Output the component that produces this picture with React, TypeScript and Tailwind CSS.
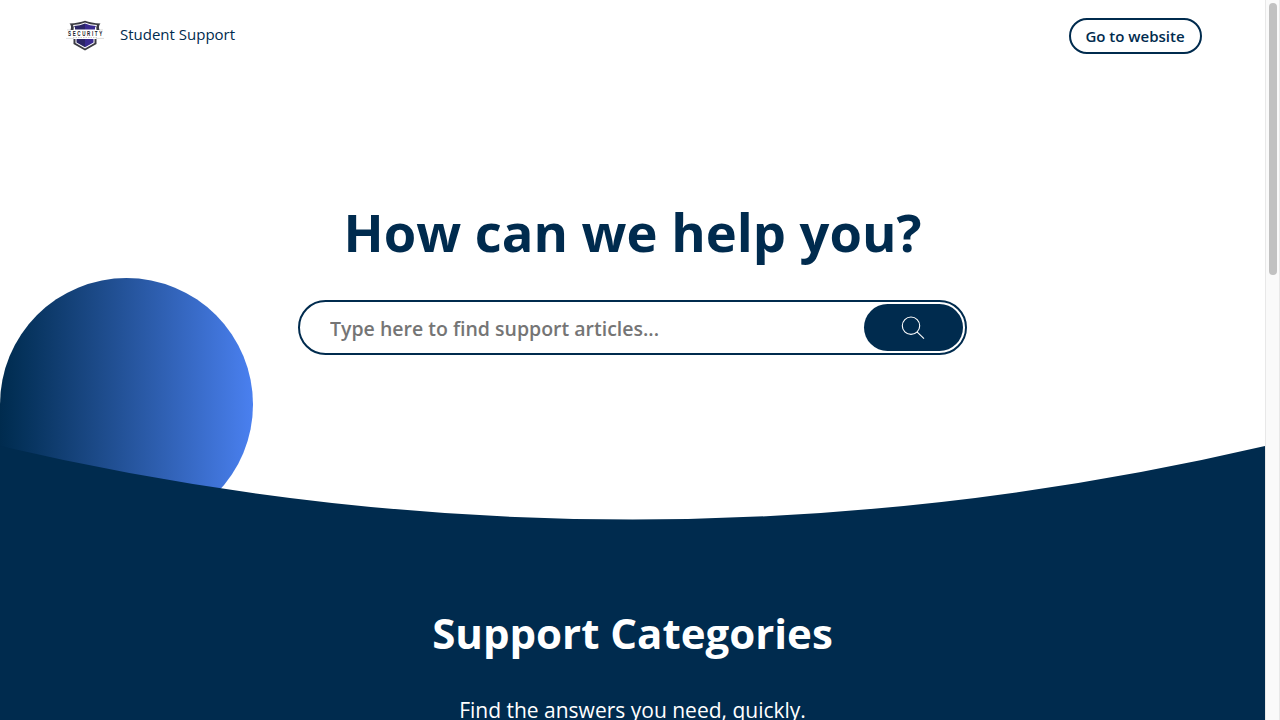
import React from "react";

function Shield() {
  return (
    <svg className="h-[32px] w-[40px] shrink-0" viewBox="0 0 40 32" fill="none">
      <path d="M4.500 4.500 Q14 4 20 1.700 Q26 4 35.500 4.500 Q33 7 34.500 11 L31.500 11 Q30.500 8 32 6 Q25 6 20 3.600 Q15 6 8 6 Q9.500 8 8.500 11 L5.500 11 Q7 7 4.500 4.500Z" fill="#3b3b42" />
      <path d="M9 7 Q15 6.700 20 4.500 V10.600 H10 Q10.500 8.500 9 7Z" fill="#2b2566" />
      <path d="M20 4.500 Q25 6.700 31 7 Q29.500 8.500 30 10.600 H20Z" fill="#3a2b90" />
      <path d="M8.500 20 V25 L20 31.500 L31.500 25 V20 L29.500 20 V24 L20 29.400 L10.500 24 V20Z" fill="#3b3b42" />
      <path d="M11.500 20 H20 V28.300 L11.500 23.500Z" fill="#2b2566" />
      <path d="M20 20 H28.500 V23.500 L20 28.300Z" fill="#3a2b90" />
      <path d="M2 10.900 H6 M34 10.900 H38 M1 19.400 H9 M31 19.400 H39" stroke="#bbb" strokeWidth=".5" />
      <path d="M8 18.500 H32" stroke="#bbb" strokeWidth=".7" strokeDasharray="1.500 1" />
      <text transform="scale(.7 1)" x="4.300" y="16.900" fontFamily="Liberation Sans" fontWeight="700" fontSize="6.500" textLength="49" fill="#202028">SECURITY</text>
    </svg>
  );
}

function Header() {
  return (
    <header className="flex h-[72px] items-start justify-between pr-[63px] pl-[65px]">
      <div className="flex pt-[19px]">
        <Shield />
        <span className="ml-[15px] text-[15px] leading-[31px]">Student Support</span>
      </div>
      <a href="#" className="mt-[18px] flex h-[36px] w-[133px] items-center justify-center rounded-full border-2 border-[#002b4e] pt-px pr-px text-[15px] font-semibold">
        Go to website
      </a>
    </header>
  );
}

function SearchBar() {
  return (
    <form className="mt-[32px] flex h-[55px] w-[669px] items-center rounded-full border-2 border-[#002b4e] bg-white pr-[2px] pl-[30px]">
      <input
        className="min-w-0 flex-1 bg-transparent pt-[2px] text-[19.5px] font-semibold outline-none placeholder:text-[#757575]"
        placeholder="Type here to find support articles..."
      />
      <button type="button" aria-label="Search" className="flex h-[47px] w-[99.5px] items-center justify-center rounded-full bg-[#002b4e]">
        <svg className="h-[24px] w-[24px]" viewBox="0 0 24 24" fill="none" stroke="#fff" strokeWidth="1.100">
          <circle cx="10" cy="9.700" r="8.700" />
          <path d="M16 15.900 L23 22.700" />
        </svg>
      </button>
    </form>
  );
}

function Scrollbar() {
  return (
    <div className="h-full w-[15px] shrink-0 border-x border-[#e8e8e8] bg-[#fafafa] pt-[3px] pl-[3px]">
      <div className="h-[272px] w-[8px] rounded-full bg-[#c1c1c1]" />
    </div>
  );
}

export default function App() {
  return (
    <div className="flex h-[720px] w-[1280px] overflow-hidden bg-white font-['Open_Sans',sans-serif] text-[#002b4e]">
      <main className="relative isolate flex h-full w-[1265px] flex-col overflow-hidden">
        <div className="absolute top-[278px] left-0 -z-10 h-[253px] w-[253px] rounded-full rounded-bl-none bg-linear-to-r from-[#002b4e] to-[#4a80f0]" />
        <svg className="absolute top-[446px] left-0 -z-10 h-[75px] w-[1265px]" viewBox="0 0 1265 75">
          <path d="M0 0 Q632.500 147 1265 0 V75 H0Z" fill="#002b4e" />
        </svg>
        <Header />
        <section className="flex h-[448px] shrink-0 flex-col items-center pt-[124px]">
          <h1 className="text-[52.5px] leading-[72px] font-bold">How can we help you?</h1>
          <SearchBar />
        </section>
        <section className="flex min-h-0 flex-1 flex-col items-center bg-[#002b4e] pt-[83px] text-white">
          <h2 className="text-[42px] leading-[60px] font-bold">Support Categories</h2>
          <p className="mt-[32px] text-[21px] leading-[30px] whitespace-nowrap">Find the answers you need, quickly.</p>
        </section>
      </main>
      <Scrollbar />
    </div>
  );
}
